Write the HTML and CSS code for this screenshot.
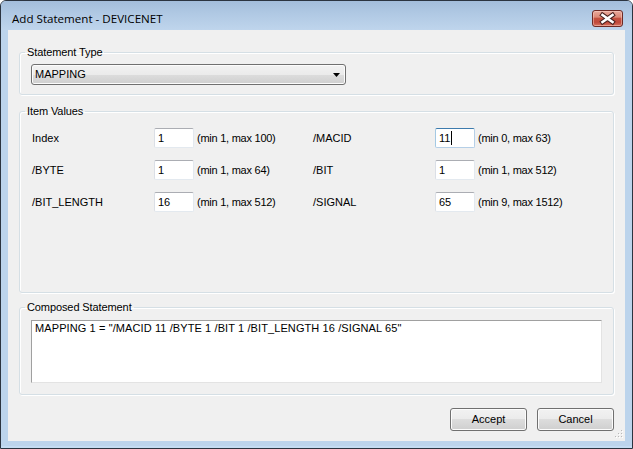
FILE: index.html
```html
<!DOCTYPE html>
<html>
<head>
<meta charset="utf-8">
<link rel="stylesheet" href="styles.css">
</head>
<body>
<div class="window">
  <div class="titlebar">
    <span class="title">Add Statement - DEVICENET</span>
    <div class="close" aria-label="Close">
      <svg width="31" height="17" viewBox="0 0 31 17">
        <path d="M10.5 5 L20.5 12 M20.5 5 L10.5 12" stroke="#4a2320" stroke-width="4.6" stroke-linecap="square" fill="none"/>
        <path d="M10.5 5 L20.5 12 M20.5 5 L10.5 12" stroke="#ffffff" stroke-width="2.6" stroke-linecap="square" fill="none"/>
      </svg>
    </div>
  </div>
  <div class="client">
    <fieldset class="group group-type">
      <legend>Statement Type</legend>
      <div class="combo">
        <span>MAPPING</span>
        <svg class="arrow" width="7" height="4" viewBox="0 0 7 4"><path d="M0 0 H7 L3.5 4 Z" fill="#000"/></svg>
      </div>
    </fieldset>
    <fieldset class="group group-values">
      <legend>Item Values</legend>
      <div class="values">
        <span class="lbl">Index</span><span class="field">1</span><span class="hint">(min 1, max 100)</span>
        <span class="lbl">/MACID</span><span class="field focused">11<i class="caret"></i></span><span class="hint">(min 0, max 63)</span>
        <span class="lbl">/BYTE</span><span class="field">1</span><span class="hint">(min 1, max 64)</span>
        <span class="lbl">/BIT</span><span class="field">1</span><span class="hint">(min 1, max 512)</span>
        <span class="lbl">/BIT_LENGTH</span><span class="field">16</span><span class="hint">(min 1, max 512)</span>
        <span class="lbl">/SIGNAL</span><span class="field">65</span><span class="hint">(min 9, max 1512)</span>
      </div>
    </fieldset>
    <fieldset class="group group-composed">
      <legend>Composed Statement</legend>
      <div class="textarea">MAPPING 1 = "/MACID 11 /BYTE 1 /BIT 1 /BIT_LENGTH 16 /SIGNAL 65"</div>
    </fieldset>
    <div class="buttons">
      <button class="btn">Accept</button>
      <button class="btn">Cancel</button>
    </div>
    <svg class="grip" width="9" height="9" viewBox="0 0 9 9">
      <g fill="#ffffff">
        <rect x="8" y="1" width="1" height="1"/>
        <rect x="5" y="4" width="1" height="1"/><rect x="8" y="4" width="1" height="1"/>
        <rect x="2" y="7" width="1" height="1"/><rect x="5" y="7" width="1" height="1"/><rect x="8" y="7" width="1" height="1"/>
      </g>
      <g fill="#b8b8b8">
        <rect x="7" y="0" width="1" height="1"/>
        <rect x="4" y="3" width="1" height="1"/><rect x="7" y="3" width="1" height="1"/>
        <rect x="1" y="6" width="1" height="1"/><rect x="4" y="6" width="1" height="1"/><rect x="7" y="6" width="1" height="1"/>
      </g>
    </svg>
  </div>
</div>
</body>
</html>
```
FILE: styles.css
```css
html, body {
  margin: 0;
  padding: 0;
  background: #ffffff;
}

.window {
  width: 633px;
  height: 449px;
  box-sizing: border-box;
  border: 1px solid #2b3440;
  border-radius: 6px 6px 0 0;
  background: #bcd4ec;
  display: flex;
  flex-direction: column;
  overflow: hidden;
  box-shadow: inset 0 -2px 0 #c4dcf2;
}

.titlebar {
  height: 29px;
  flex: none;
  display: flex;
  align-items: flex-start;
  padding-left: 11px;
  background: linear-gradient(to bottom, #a3bddb 0%, #afc8e3 40%, #bfd5ec 100%);
}

.title {
  font-family: "Open Sans", "Noto Sans", sans-serif;
  font-size: 11.6px;
  line-height: 16px;
  margin-top: 10px;
  color: #000000;
  flex: 1;
  white-space: nowrap;
}

.close {
  width: 31px;
  height: 17px;
  box-sizing: border-box;
  margin-top: 9px;
  margin-right: 9px;
  border: 1px solid #6d2a25;
  border-radius: 3px;
  background: linear-gradient(to bottom, #e9a99b 0%, #dd8a78 40%, #c4513f 50%, #c0483a 75%, #d6735f 100%);
  box-shadow: inset 0 0 0 1px rgba(255, 220, 210, 0.45);
  display: flex;
  align-items: center;
  justify-content: center;
}

.close svg {
  display: block;
  margin: -1px;
}

.client {
  position: relative;
  flex: none;
  height: 411px;
  margin: 0 7px;
  background: #f0f0f0;
  box-sizing: border-box;
  padding: 16px 11px 0;
  display: flex;
  flex-direction: column;
  font-family: "Liberation Sans", Arial, sans-serif;
  font-size: 11px;
  color: #000000;
}

.group {
  margin: 0;
  padding: 0 11px;
  border: 1px solid #d5dfe5;
  border-radius: 3px;
  box-sizing: border-box;
  min-width: 0;
  box-shadow: inset 1px 1px 0 #ffffff, 1px 1px 0 #ffffff;
}

.group legend {
  padding: 0 2px;
  margin-left: -6px;
  font-size: 11px;
  line-height: 13px;
  letter-spacing: -0.1px;
}

.group-type {
  padding-top: 5px;
  padding-bottom: 9px;
}

.group-values {
  margin-top: 10px;
  height: 188px;
  padding-top: 10px;
}

.group-composed {
  margin-top: 8px;
  padding-top: 6px;
  padding-bottom: 11px;
}

.combo {
  width: 315px;
  height: 21px;
  box-sizing: border-box;
  border: 1px solid #707070;
  border-radius: 3px;
  background: linear-gradient(to bottom, #f2f2f2 0%, #ebebeb 50%, #dddddd 50%, #cfcfcf 100%);
  box-shadow: inset 0 0 0 1px #fcfcfc;
  display: flex;
  align-items: center;
  padding: 0 4px 0 3px;
}

.combo span {
  flex: 1;
  line-height: 13px;
}

.combo .arrow {
  display: block;
  margin-right: 1px;
}

.values {
  display: grid;
  grid-template-columns: 122px 40px 119px 122px 40px auto;
  grid-auto-rows: 20px;
  row-gap: 12px;
  align-items: center;
  padding-left: 1px;
}

.lbl {
  line-height: 13px;
}

.hint {
  padding-left: 3px;
  line-height: 13px;
  white-space: nowrap;
  letter-spacing: -0.25px;
}

.field {
  height: 20px;
  box-sizing: border-box;
  background: #ffffff;
  border: 1px solid #e3e9ef;
  border-top-color: #abadb3;
  border-left-color: #dbdfe6;
  border-radius: 2px;
  padding: 0 3px;
  display: flex;
  align-items: center;
  line-height: 13px;
}

.field.focused {
  border-color: #b5cfe7;
  border-top-color: #3d7bad;
  border-left-color: #a4c9e3;
}

.caret {
  display: block;
  width: 1px;
  height: 14px;
  background: #000000;
  margin-left: 1px;
}

.textarea {
  height: 63px;
  box-sizing: border-box;
  background: #ffffff;
  border: 1px solid #e3e3e3;
  border-top-color: #a0a0a0;
  border-left-color: #a0a0a0;
  padding: 1px 3px;
  line-height: 13px;
  white-space: nowrap;
  letter-spacing: 0.1px;
}

.buttons {
  margin-top: 13px;
  display: flex;
  justify-content: flex-end;
  gap: 10px;
}

.btn {
  width: 77px;
  height: 23px;
  box-sizing: border-box;
  border: 1px solid #707070;
  border-radius: 3px;
  background: linear-gradient(to bottom, #f2f2f2 0%, #ebebeb 50%, #dddddd 50%, #cfcfcf 100%);
  box-shadow: inset 0 0 0 1px #fcfcfc;
  font-family: "Liberation Sans", Arial, sans-serif;
  font-size: 11px;
  color: #000000;
  padding: 0;
  line-height: 13px;
}

.grip {
  position: absolute;
  right: 2px;
  bottom: 2px;
  display: block;
}
```
